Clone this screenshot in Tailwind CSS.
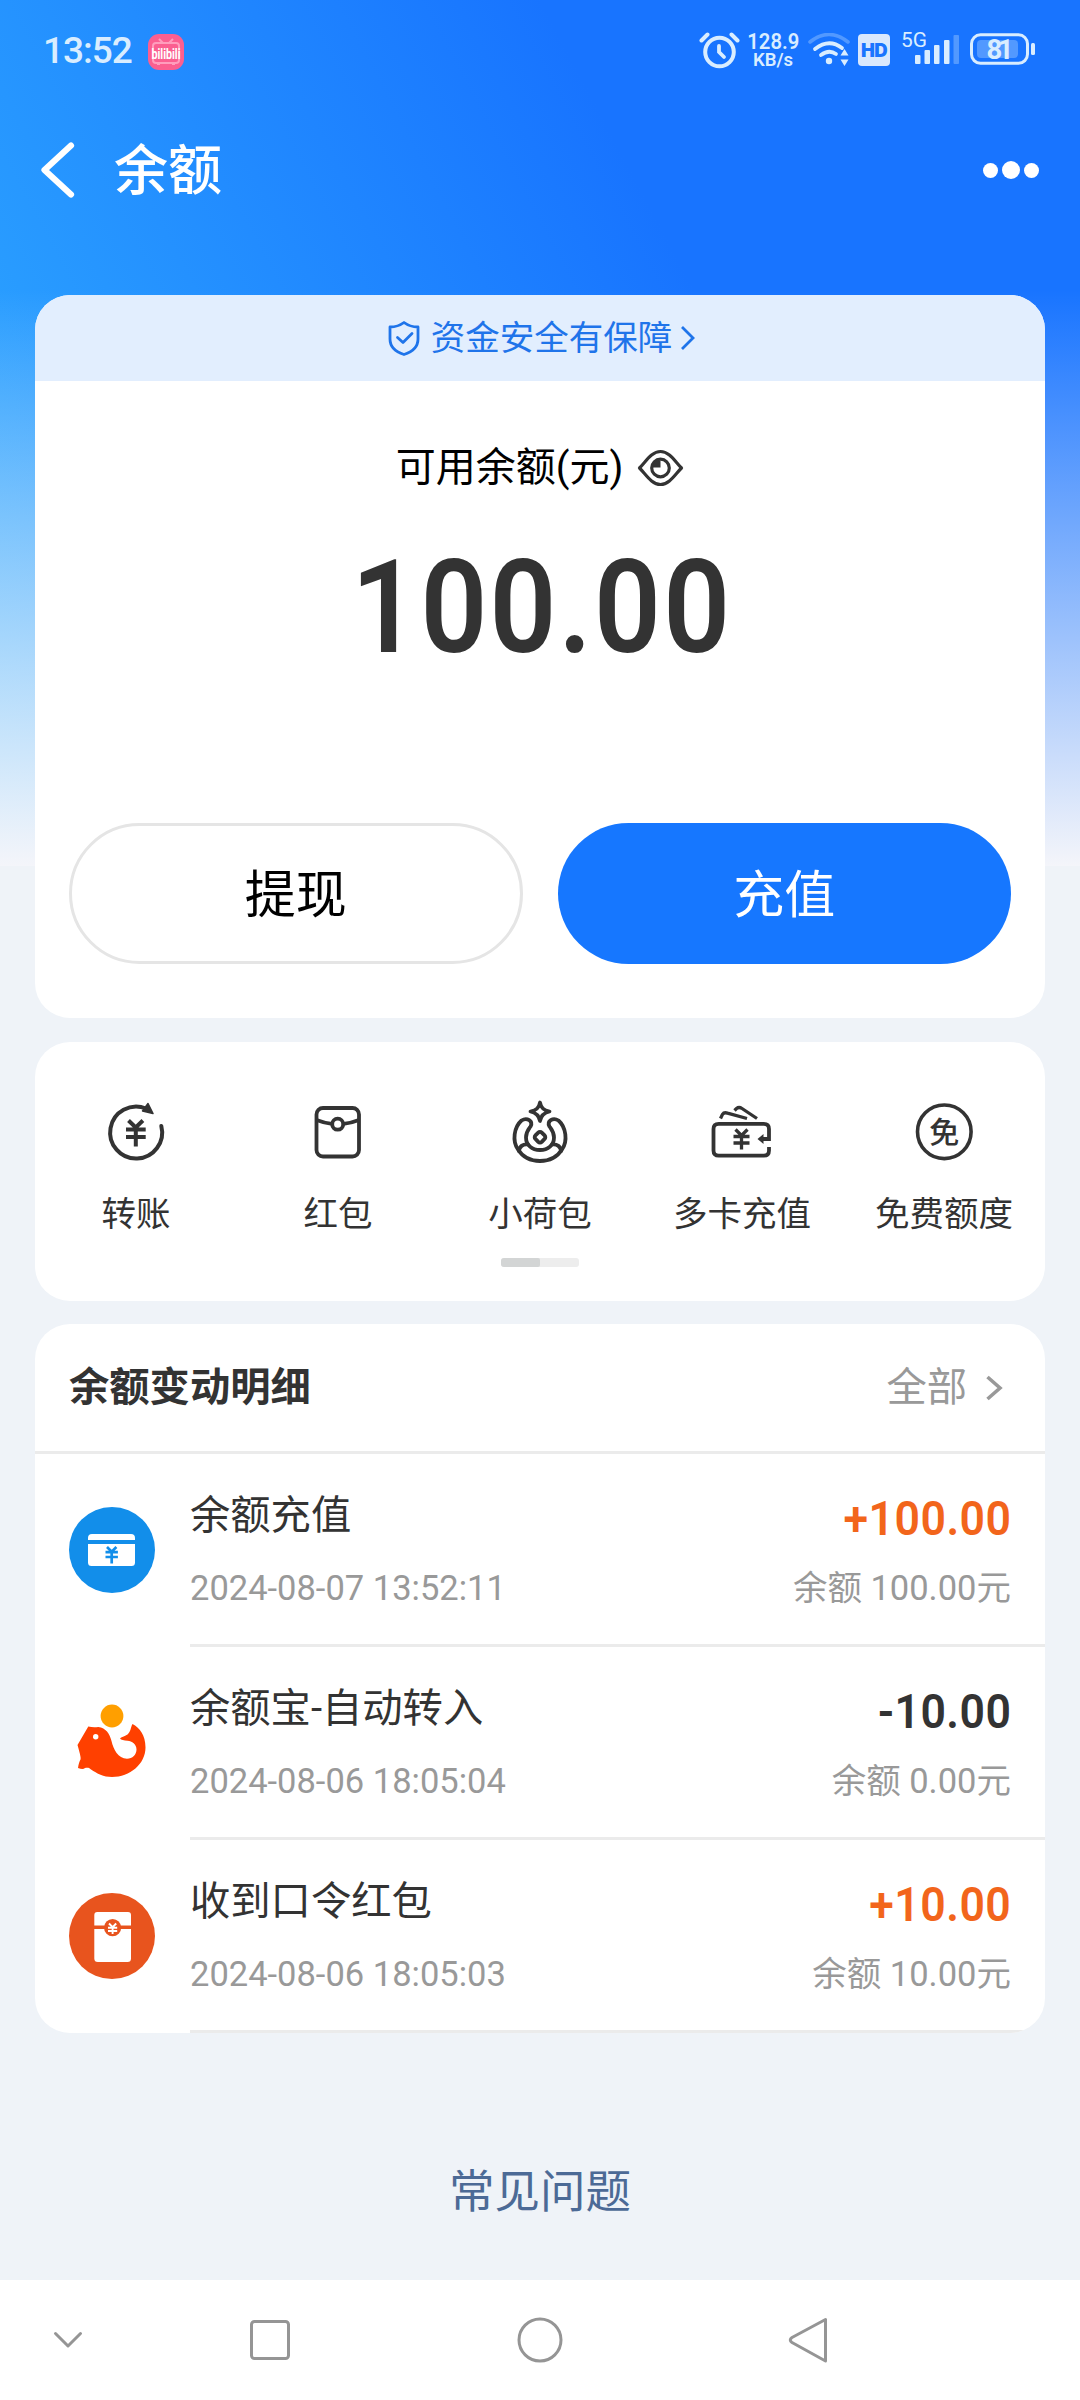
<!DOCTYPE html>
<html lang="zh-CN">
<head>
<meta charset="utf-8">
<title>余额</title>
<script src="https://cdn.jsdelivr.net/npm/@tailwindcss/browser@4"></script>
</head>
<body class="bg-[#eff3f8]">
<div class="relative isolate flex h-[2400px] w-[1080px] flex-col overflow-hidden bg-[#eff3f8] font-['Roboto','Noto_Sans_CJK_SC',sans-serif] text-[#333]">
  <!-- blue backdrop fading into the page colour -->
  <div class="absolute inset-x-0 top-0 -z-10 h-[866px] bg-[linear-gradient(to_bottom,rgba(244,245,250,0)_290px,#f4f5fa_866px),linear-gradient(62deg,#30aeff_0%,#1874ff_65%)]"></div>

  <!-- status bar -->
  <div class="flex h-[102px] shrink-0 items-center pl-[43px] text-[#d9edff]">
    <span class="w-[105px] text-[37px] leading-[40px] font-medium tracking-[-1px]">13:52</span>
    <svg class="mt-[2px] h-[36px] w-[36px] overflow-visible" viewBox="0 0 36 36">
      <rect width="36" height="36" rx="11" fill="#fb5f90"/>
      <path d="M11 5l4 4M25 5l-4 4" stroke="#ff9dbc" stroke-width="2"/>
      <rect x="5" y="9" width="26" height="20" rx="3" fill="none" stroke="#ff9dbc" stroke-width="2"/>
      <path d="M9 30h3M24 30h3" stroke="#ff9dbc" stroke-width="2"/>
      <text x="3.500" y="24.500" textLength="29" lengthAdjust="spacingAndGlyphs" font-size="15" font-weight="700" fill="#fff">bilibili</text>
    </svg>
    <svg class="ml-[515px] h-[40px] w-[42px]" viewBox="0 0 42 40" fill="none" stroke="currentColor" stroke-linecap="round">
      <circle cx="20.500" cy="21" r="14.300" stroke-width="4"/>
      <path d="M20 15v6l5 5" stroke-width="3.800"/>
      <path d="M2.500 9.500L8.500 3.500M38.500 9.500L32.500 3.500" stroke-width="4"/>
    </svg>
    <div class="ml-[6px] flex w-[52px] flex-col items-center text-[22px] leading-[18px] font-semibold">
      <span class="scale-x-[0.920]">128.9</span><span class="text-[18.500px]">KB/s</span>
    </div>
    <svg class="ml-[8px] h-[36px] w-[44px]" viewBox="0 0 44 36" fill="none" stroke="currentColor" stroke-linecap="round">
      <path d="M3 9Q22 -6 41 9" stroke-width="3.600" opacity=".3"/>
      <path d="M8 16Q22 5 35 15" stroke-width="3.800"/>
      <path d="M14 22Q22 16 29 21" stroke-width="3.800"/>
      <circle cx="22" cy="28" r="3.200" fill="currentColor" stroke="none"/>
      <path d="M33.500 22.500L37.500 16l4 6.500zM33.500 26.500h8l-4 6.500z" fill="currentColor" stroke="none"/>
    </svg>
    <div class="-mt-[2px] ml-[7px] h-[32px] w-[32px] rounded-[4px] bg-[#d9e8fd] text-center font-['Inter'] text-[18.500px] leading-[32px] font-black tracking-[-0.500px] text-[#1a75ff]">HD</div>
    <svg class="-mt-[2px] ml-[11px] h-[36px] w-[60px] overflow-visible" viewBox="0 0 60 36" fill="currentColor">
      <text x="0" y="15" font-size="21" textLength="26" lengthAdjust="spacingAndGlyphs">5G</text>
      <rect x="14" y="23" width="5.500" height="9" rx="1"/>
      <rect x="23.500" y="18" width="5.500" height="14" rx="1"/>
      <rect x="33" y="13" width="5.500" height="19" rx="1"/>
      <rect x="43" y="8" width="5.500" height="24" rx="1"/>
      <rect x="52.500" y="3" width="5.500" height="29" rx="1" opacity=".3"/>
    </svg>
    <svg class="-mt-[4px] ml-[9px] h-[32px] w-[66px]" viewBox="0 0 66 32">
      <rect x="1.500" y="1.800" width="56" height="28.500" rx="9" fill="none" stroke="#d9edff" stroke-width="3"/>
      <rect x="7" y="7" width="41" height="18" rx="4" fill="#d9edff" opacity=".3"/>
      <rect x="61" y="10" width="4" height="12" rx="1.500" fill="#d9edff"/>
      <text x="16.500" y="25.500" font-size="27.500" font-weight="700" fill="#d9edff" textLength="27">81</text>
    </svg>
  </div>

  <!-- title bar -->
  <div class="flex h-[136px] shrink-0 items-center pl-[38px] text-white">
    <svg class="h-[60px] w-[40px]" viewBox="0 0 40 60" fill="none" stroke="currentColor" stroke-width="6.200" stroke-linecap="round" stroke-linejoin="round"><path d="M33 5.500L6.500 30l26.500 24.500"/></svg>
    <h1 class="ml-[36px] pt-[4px] text-[54px] leading-[60px] font-medium">余额</h1>
    <div class="ml-auto flex items-center gap-[4px] pr-[41px]">
      <span class="size-[15px] rounded-full bg-white"></span>
      <span class="size-[18px] rounded-full bg-white"></span>
      <span class="size-[15px] rounded-full bg-white"></span>
    </div>
  </div>

  <!-- balance card -->
  <section class="mx-[35px] mt-[57px] flex h-[723px] shrink-0 flex-col overflow-hidden rounded-[35px] bg-white">
    <div class="flex h-[86px] shrink-0 items-center justify-center bg-[#e2eefe] pl-[3px] text-[34.500px] leading-[40px] text-[#1f74ea]">
      <svg class="h-[38px] w-[36px]" viewBox="0 0 36 38" fill="none" stroke="currentColor" stroke-width="2.800" stroke-linejoin="round" stroke-linecap="round"><path d="M18 3.500C14 6.500 9 8 4 8v12c0 8 6 13 14 15.500C26 33 32 28 32 20V8C27 8 22 6.500 18 3.500z"/><path d="M11.500 18.500l5.500 5 9-9"/></svg>
      <span class="ml-[9px]">资金安全有保障</span>
      <svg class="ml-[7px] h-[28px] w-[18px]" viewBox="0 0 18 28" fill="none" stroke="currentColor" stroke-width="2.800"><path d="M3 3l11 11L3 25"/></svg>
    </div>
    <div class="mt-[60px] flex h-[54px] items-center justify-center text-[40px] leading-[54px] text-black">
      <span>可用余额(元)</span>
      <svg class="ml-[14px] h-[46px] w-[47px]" viewBox="0 0 47 46" fill="none" stroke="#333" stroke-width="3.200" stroke-linejoin="round"><path d="M2.500 23C9 16.500 14.500 6.500 23.500 6.500S38 16.500 44.500 23C38 29.500 32.500 39.500 23.500 39.500S9 29.500 2.500 23z"/><circle cx="23.500" cy="23" r="8.800"/><path d="M16 22.500h7.500V15.500c-5 0-8 3-7.500 7z" fill="#333" stroke="none"/></svg>
    </div>
    <div class="mt-[38px] h-[150px] origin-center scale-x-[0.900] pl-[4px] text-center text-[130px] leading-[150px] font-semibold tracking-[2.500px]">100.00</div>
    <div class="mt-[140px] grid grid-cols-2 gap-[35px] px-[34px]">
      <div class="flex h-[141px] items-center justify-center rounded-full border-[3px] border-[#e5e5e5] pt-[4px] text-[51px] leading-none text-black">提现</div>
      <div class="flex h-[141px] items-center justify-center rounded-full bg-[#1677ff] pt-[4px] text-[51px] leading-none text-white">充值</div>
    </div>
  </section>

  <!-- shortcuts -->
  <section class="mx-[35px] mt-[24px] flex h-[259px] shrink-0 flex-col items-center rounded-[35px] bg-white pt-[58px]">
    <div class="grid w-full grid-cols-5 text-[34.500px] leading-[40px]">
      <div class="flex flex-col items-center gap-[30px]">
        <svg class="size-[64px]" viewBox="0 0 64 64" fill="none" stroke="#333" stroke-width="4">
          <path d="M57.300 26A26 26 0 1 1 42 8.500" stroke-linecap="round"/>
          <path d="M44 3.500L49 13.500 38.500 11z" fill="#333" stroke-width="1.500" stroke-linejoin="round"/>
          <path d="M24.500 20.500l7.200 7 7.200-7M22 29.500h19.700M22 37h19.700M31.800 27v19.500"/>
        </svg><span>转账</span></div>
      <div class="flex flex-col items-center gap-[30px]">
        <svg class="size-[64px]" viewBox="0 0 64 64" fill="none" stroke="#333" stroke-width="3.800">
          <rect x="10.500" y="8" width="42.500" height="48.500" rx="6.500"/>
          <circle cx="31.700" cy="24.200" r="5.500"/><path d="M10.500 20Q18 23 26 23.800M53 20Q45.500 23 37.500 23.800"/>
        </svg><span>红包</span></div>
      <div class="flex flex-col items-center gap-[30px]">
        <svg class="size-[64px]" viewBox="0 0 64 64" fill="none" stroke="#333" stroke-width="3.800" stroke-linejoin="round" stroke-linecap="round">
          <path d="M32 2.500C33 8 35.500 10.300 41.500 11.500 35.500 12.800 33 15.500 32 21 31 15.500 28.500 12.800 22.500 11.500 28.500 10.300 31 8 32 2.500z"/>
          <path d="M10 49.500C4 41 6 27 13.500 20.500 19 17 25.500 21 22.500 26.500 20 30 18 32 18 37.500 18 45 24 50 32 50S46 45 46 37.500C46 32 44 30 41.500 26.500 38.500 21 45 17 50.500 20.500 58 27 60 41 54 49.500 49 57.500 41 61 32 61S15 57.500 10 49.500z"/>
          <path d="M20 44.500C15 43.500 11 47 11 51M44 44.500C49 43.500 53 47 53 51"/>
          <rect x="27.500" y="32.700" width="9" height="9" rx="2.500" transform="rotate(45 32 37.200)"/>
        </svg><span>小荷包</span></div>
      <div class="flex flex-col items-center gap-[30px]">
        <svg class="size-[64px]" viewBox="0 0 64 64" fill="none" stroke="#333" stroke-width="3.800">
          <path d="M59 47v3.500q0 5.200-5.200 5.200H8.700q-5.200 0-5.200-5.200V29q0-5.200 5.200-5.200h45.100q5.200 0 5.200 5.200V39H51"/>
          <path d="M53.500 34v10l-6-5z" fill="#333" stroke="none"/>
          <path d="M10.500 18.500l2-4.200q1.500-2.300 5-1.200L37 18.500M24.500 10.500l2-2q2.500-2 5.500 0L47 18.500" stroke-width="3.300"/>
          <path d="M25.500 29.500l6 6 6-6M23.500 36.500h16M23.500 43h16M31.500 35v14.500" stroke-width="3.300"/>
        </svg><span>多卡充值</span></div>
      <div class="flex flex-col items-center gap-[30px]">
        <svg class="size-[64px]" viewBox="0 0 64 64">
          <circle cx="32.300" cy="31.800" r="26.800" fill="none" stroke="#333" stroke-width="3.600"/>
          <text x="32.300" y="43" text-anchor="middle" font-size="30" font-weight="500" fill="#333">免</text>
        </svg><span>免费额度</span></div>
    </div>
    <div class="mt-[24px] h-[9px] w-[78px] overflow-hidden rounded-[3px] bg-[#ededed]"><div class="h-full w-1/2 rounded-r-[2px] bg-[#d3d5d5]"></div></div>
  </section>

  <!-- transactions -->
  <section class="mx-[35px] mt-[23px] flex shrink-0 flex-col overflow-hidden rounded-[35px] bg-white">
    <div class="flex h-[130px] items-center border-b-[3px] border-[#ebebeb] pr-[40px] pl-[34px] text-[40.300px] leading-[50px]">
      <h2 class="font-bold">余额变动明细</h2>
      <span class="ml-auto text-[#999]">全部</span>
      <svg class="ml-[18px] h-[30px] w-[20px]" viewBox="0 0 20 30" fill="none" stroke="#999" stroke-width="3.600"><path d="M2.500 4l12.500 11L2.500 26"/></svg>
    </div>

    <div class="flex h-[193px] pl-[34px]">
      <svg class="mt-[53px] size-[86px]" viewBox="0 0 86 86">
        <circle cx="43" cy="43" r="43" fill="#128eea"/>
        <path d="M19 33v-2q0-4 4-4h39q4 0 4 4v2zM19 37h47v18.500q0 3.500-3.500 3.500h-40Q19 59 19 55.500z" fill="#fff"/>
        <path d="M38 40l4.700 4.700 4.700-4.700M36.500 45.200h12.400M36.500 50h12.400M42.700 44v12.500" fill="none" stroke="#128eea" stroke-width="2.700"/>
      </svg>
      <div class="ml-[35px] flex flex-1 justify-between border-b-[3px] border-[#ebebeb] pt-[35px] pr-[34px]">
        <div class="flex flex-col gap-[20px]"><span class="text-[40.300px] leading-[54px]">余额充值</span><span class="text-[34.500px] leading-[50px] text-[#999]">2024-08-07 13:52:11</span></div>
        <div class="flex flex-col items-end gap-[20px]"><span class="origin-right scale-x-[0.920] text-[48.500px] leading-[60px] font-semibold tracking-[0.500px] text-[#f2651b]">+100.00</span><span class="-mt-[6px] text-[34.500px] leading-[50px] text-[#999]">余额 100.00元</span></div>
      </div>
    </div>

    <div class="flex h-[193px] pl-[34px]">
      <svg class="mt-[53px] size-[86px]" viewBox="0 0 86 86">
        <circle cx="43" cy="16" r="11.400" fill="#ff9f00"/>
        <path d="M19.300 26.500Q24 27.800 29.300 27C37 28 40.500 33.500 42.500 41 44.500 49.500 49 58.500 58 58.800 63.500 58.800 67.500 54.500 67.500 49.500 67.500 44 63 41.300 58.500 40.700 55 40.500 52 40 51 38.500 52 37 55.500 36.500 58.500 34.500 62 31.500 61.500 27.500 63.500 24 70.500 27.500 76.500 35 76.500 47.500 76.500 64 61 77 43 77 34.500 77 28 73.500 22 69.500 20 67.500 18.300 67.600 16 68 14.500 69.500 12 69 9 68 9.500 64 10.500 61.500 11.500 59.500 12 58 11.500 55.500 8.500 45 10 32 15 28Q16.500 26 19.300 26.500z" fill="#ff4000"/>
        <circle cx="26.700" cy="36.700" r="2.700" fill="#fff"/>
      </svg>
      <div class="ml-[35px] flex flex-1 justify-between border-b-[3px] border-[#ebebeb] pt-[35px] pr-[34px]">
        <div class="flex flex-col gap-[20px]"><span class="text-[40.300px] leading-[54px]">余额宝-自动转入</span><span class="text-[34.500px] leading-[50px] text-[#999]">2024-08-06 18:05:04</span></div>
        <div class="flex flex-col items-end gap-[20px]"><span class="origin-right scale-x-[0.920] text-[48.500px] leading-[60px] font-semibold tracking-[0.500px]">-10.00</span><span class="-mt-[6px] text-[34.500px] leading-[50px] text-[#999]">余额 0.00元</span></div>
      </div>
    </div>

    <div class="flex h-[193px] pl-[34px]">
      <svg class="mt-[53px] size-[86px]" viewBox="0 0 86 86">
        <circle cx="43" cy="43" r="43" fill="#e8541e"/>
        <path d="M25.300 32.500V22q0-3 3-3H59q3 0 3 3v10.500zM25.300 36H62v29.500q0 3.500-3.500 3.500H28.800q-3.500 0-3.500-3.500z" fill="#fff"/>
        <circle cx="43.600" cy="34.700" r="8.600" fill="#e8541e"/>
        <path d="M40 30.500l3.600 3.700 3.600-3.700M39 34.800h9.200M39 38h9.200M43.600 34v7" fill="none" stroke="#fff" stroke-width="1.900"/>
      </svg>
      <div class="ml-[35px] flex flex-1 justify-between border-b-[3px] border-[#ebebeb] pt-[35px] pr-[34px]">
        <div class="flex flex-col gap-[20px]"><span class="text-[40.300px] leading-[54px]">收到口令红包</span><span class="text-[34.500px] leading-[50px] text-[#999]">2024-08-06 18:05:03</span></div>
        <div class="flex flex-col items-end gap-[20px]"><span class="origin-right scale-x-[0.920] text-[48.500px] leading-[60px] font-semibold tracking-[0.500px] text-[#f2651b]">+10.00</span><span class="-mt-[6px] text-[34.500px] leading-[50px] text-[#999]">余额 10.00元</span></div>
      </div>
    </div>
  </section>

  <div class="flex flex-1 items-center justify-center pt-[73px] text-[45.500px] leading-none text-[#4c6a96]">常见问题</div>

  <!-- system navigation -->
  <nav class="h-[120px] shrink-0 bg-white">
    <svg class="h-[120px] w-[1080px]" viewBox="0 0 1080 120" fill="none" stroke="#959595" stroke-width="3" stroke-linejoin="round" stroke-linecap="round">
      <path d="M55.500 53.500L68 66l12.500-12.500"/>
      <rect x="251.500" y="41.500" width="37" height="37" rx="3"/>
      <circle cx="540" cy="60" r="21"/>
      <path d="M825.500 39.500v41.500L792 62.500q-3.500-2.500 0-5z"/>
    </svg>
  </nav>
</div>
</body>
</html>
